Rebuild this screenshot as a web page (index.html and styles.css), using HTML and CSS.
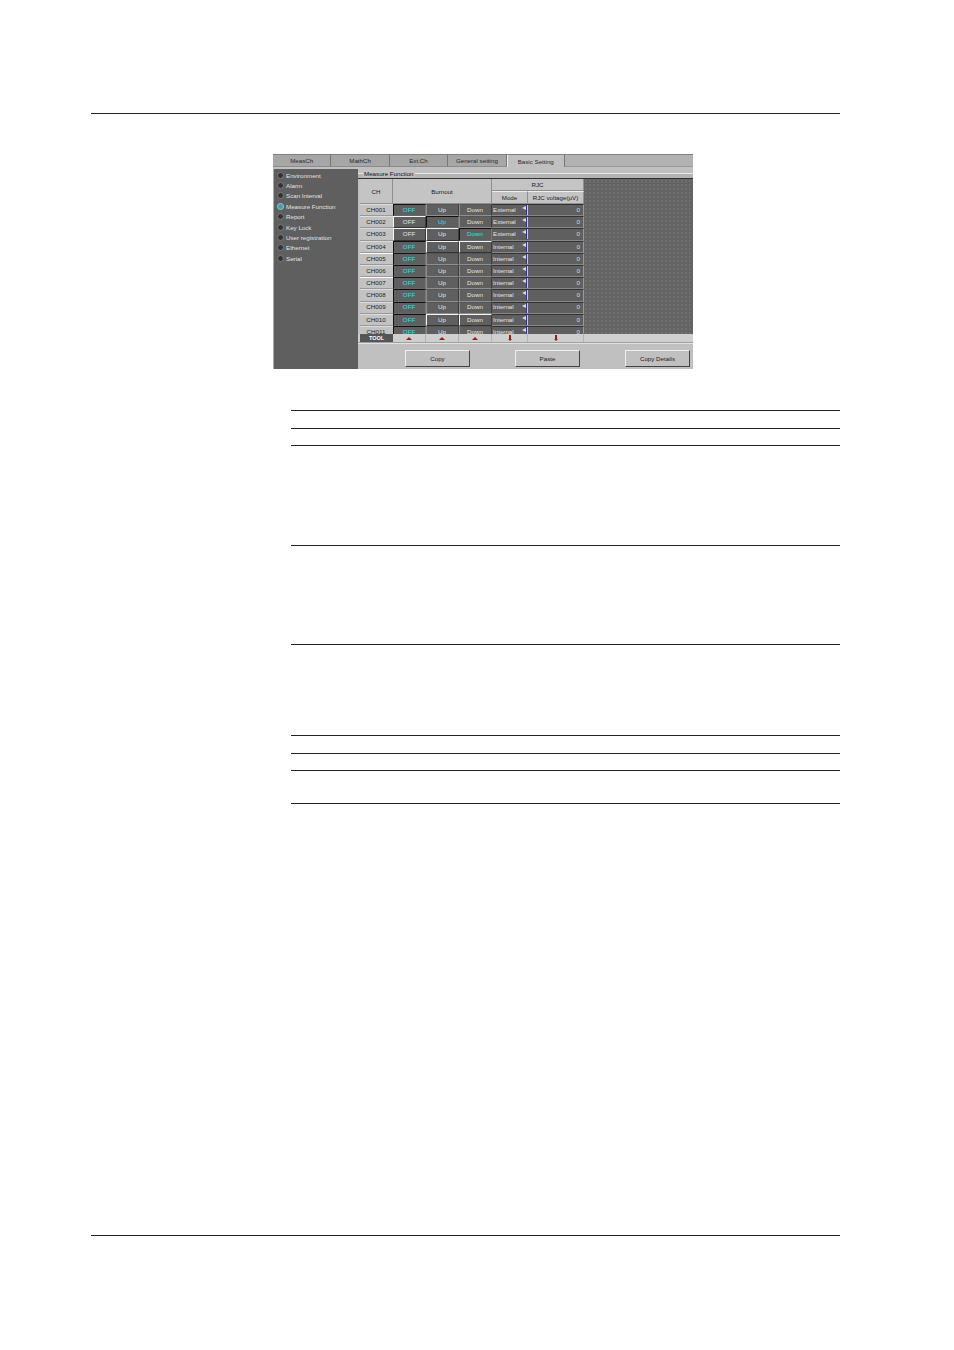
FILE: index.html
```html
<!DOCTYPE html>
<html lang="en">
<head>
    <meta charset="UTF-8">
    <title>Measure Function</title>
    <link rel="stylesheet" href="styles.css">
</head>
<body>
    <div class="head-rule"></div>

    <div class="window">
        <div class="tabs">
            <div class="tab">MeasCh</div>
            <div class="tab">MathCh</div>
            <div class="tab">Ext.Ch</div>
            <div class="tab">General setting</div>
            <div class="tab tab-active">Basic Setting</div>
            <div class="tab-rest"></div>
        </div>
        <div class="window-body">
            <ul class="side">
                <li><span class="lamp"></span>Environment</li>
                <li><span class="lamp"></span>Alarm</li>
                <li><span class="lamp"></span>Scan Interval</li>
                <li><span class="lamp lamp-on"></span>Measure Function</li>
                <li><span class="lamp"></span>Report</li>
                <li><span class="lamp"></span>Key Lock</li>
                <li><span class="lamp"></span>User registration</li>
                <li><span class="lamp"></span>Ethernet</li>
                <li><span class="lamp"></span>Serial</li>
            </ul>
            <div class="main">
                <div class="group-title"><span>Measure Function</span></div>
                <div class="work">
                    <div class="sheet">
                        <div class="sheet-head">
                            <div class="hd hd-ch">CH</div>
                            <div class="hd hd-burnout">Burnout</div>
                            <div class="hd hd-rjc">RJC</div>
                            <div class="hd hd-mode">Mode</div>
                            <div class="hd hd-volt">RJC voltage(µV)</div>
                        </div>
                        <div class="sheet-rows">
                            <div class="row"><div class="ch">CH001</div><div class="btn on">OFF</div><div class="btn">Up</div><div class="btn">Down</div><div class="mode">External<i class="spin"></i></div><div class="volt">0</div></div>
                            <div class="row"><div class="ch">CH002</div><div class="btn lit">OFF</div><div class="btn on">Up</div><div class="btn">Down</div><div class="mode">External<i class="spin"></i></div><div class="volt">0</div></div>
                            <div class="row"><div class="ch">CH003</div><div class="btn lit">OFF</div><div class="btn lit">Up</div><div class="btn on">Down</div><div class="mode">External<i class="spin"></i></div><div class="volt">0</div></div>
                            <div class="row"><div class="ch">CH004</div><div class="btn on">OFF</div><div class="btn lit">Up</div><div class="btn lit">Down</div><div class="mode">Internal<i class="spin"></i></div><div class="volt">0</div></div>
                            <div class="row"><div class="ch lit">CH005</div><div class="btn on">OFF</div><div class="btn">Up</div><div class="btn">Down</div><div class="mode">Internal<i class="spin"></i></div><div class="volt">0</div></div>
                            <div class="row"><div class="ch">CH006</div><div class="btn on">OFF</div><div class="btn">Up</div><div class="btn">Down</div><div class="mode">Internal<i class="spin"></i></div><div class="volt">0</div></div>
                            <div class="row"><div class="ch lit">CH007</div><div class="btn on">OFF</div><div class="btn">Up</div><div class="btn">Down</div><div class="mode">Internal<i class="spin"></i></div><div class="volt">0</div></div>
                            <div class="row"><div class="ch">CH008</div><div class="btn on">OFF</div><div class="btn">Up</div><div class="btn">Down</div><div class="mode">Internal<i class="spin"></i></div><div class="volt">0</div></div>
                            <div class="row"><div class="ch">CH009</div><div class="btn on">OFF</div><div class="btn">Up</div><div class="btn">Down</div><div class="mode">Internal<i class="spin"></i></div><div class="volt">0</div></div>
                            <div class="row"><div class="ch">CH010</div><div class="btn on">OFF</div><div class="btn lit">Up</div><div class="btn lit">Down</div><div class="mode">Internal<i class="spin"></i></div><div class="volt">0</div></div>
                            <div class="row"><div class="ch">CH011</div><div class="btn on">OFF</div><div class="btn">Up</div><div class="btn">Down</div><div class="mode">Internal<i class="spin"></i></div><div class="volt">0</div></div>
                        </div>
                    </div>
                    <div class="dots"></div>
                </div>
                <div class="tool">
                    <div class="tool-name">TOOL</div>
                    <div class="tool-cell"><i class="up"></i></div>
                    <div class="tool-cell"><i class="up"></i></div>
                    <div class="tool-cell"><i class="up"></i></div>
                    <div class="tool-cell"><i class="down"></i></div>
                    <div class="tool-cell"><i class="down"></i></div>
                </div>
                <div class="actions">
                    <button class="act">Copy</button>
                    <button class="act">Paste</button>
                    <button class="act">Copy Details</button>
                </div>
            </div>
        </div>
    </div>

    <div class="spec">
        <div class="spec-row h18"></div>
        <div class="spec-row h17"></div>
        <div class="spec-row h100"></div>
        <div class="spec-row h99"></div>
        <div class="spec-row h91"></div>
        <div class="spec-row h18"></div>
        <div class="spec-row h17"></div>
        <div class="spec-row h33 spec-last"></div>
    </div>

    <div class="foot-rule"></div>
</body>
</html>
```

FILE: styles.css
```css
* {
    box-sizing: border-box;
}

body {
    margin: 0;
    height: 1350px;
    background-color: white;
    font-family: "Liberation Sans", Arial, sans-serif;
    overflow: hidden;
}

.head-rule {
    margin: 113px 114px 0 91px;
    height: 1px;
    background-color: #222;
}

.foot-rule {
    margin: 431px 114px 0 91px;
    height: 1px;
    background-color: #222;
}

/* Screenshot window */
.window {
    width: 420px;
    height: 215px;
    margin: 40px 0 0 273px;
    background-color: #c0c0c0;
    font-size: 6.2px;
    display: flex;
    flex-direction: column;
    overflow: hidden;
}

.tabs {
    display: flex;
    height: 13px;
    border-top: 1px solid #808080;
    flex-shrink: 0;
}

.tab {
    width: 58.4px;
    background-color: #a6a6a6;
    border-right: 1px solid #777;
    border-bottom: 1px solid #8c8c8c;
    color: #2a2a2a;
    display: flex;
    align-items: center;
    justify-content: center;
}

.tab-active {
    background-color: #c0c0c0;
    border-left: 1px solid #eee;
    border-bottom: none;
}

.tab-rest {
    flex: 1;
    background-color: #b2b2b2;
    border-bottom: 1px solid #999;
}

.window-body {
    flex: 1;
    display: flex;
    min-height: 0;
}

.side {
    list-style: none;
    width: 85px;
    margin: 2px 0 0;
    padding: 1px 0 0 3px;
    background-color: #5f5f5f;
    border-left: 1px solid #a8a8a8;
    color: #e2e2e2;
}

.side li {
    height: 10.4px;
    display: flex;
    align-items: center;
    gap: 2px;
}

.lamp {
    width: 7px;
    height: 7px;
    border-radius: 50%;
    background-color: #333;
    border: 1px solid #7c7c7c;
}

.lamp-on {
    background-color: #3f9fae;
    border-color: #9ccbd2;
}

.main {
    flex: 1;
    display: flex;
    flex-direction: column;
    min-width: 0;
}

.group-title {
    height: 12px;
    padding: 3px 0 0 5px;
    background: linear-gradient(#c0c0c0 6px, #e6e6e6 6px, #e6e6e6 7px, #b4b4b4 7px);
    border-bottom: 1px solid #333;
    color: #111;
    line-height: 7px;
}

.group-title span {
    background-color: #c0c0c0;
    padding: 0 1px;
}

.work {
    height: 155px;
    display: flex;
    padding-left: 2px;
    background-color: #c0c0c0;
}

.sheet {
    width: 224px;
    flex-shrink: 0;
}

.sheet-head {
    height: 25px;
    display: grid;
    grid-template-columns: 33px 99px 36px 56px;
    grid-template-rows: 12px 13px;
}

.hd {
    display: flex;
    align-items: center;
    justify-content: center;
    background-color: #c4c4c4;
    color: #222;
    border-right: 1px solid #8f8f8f;
    border-bottom: 1px solid #8f8f8f;
}

.hd-ch,
.hd-burnout {
    grid-row: span 2;
}

.hd-rjc {
    grid-column: span 2;
}

.hd-mode,
.hd-volt {
    border-top: 1px solid #eee;
}

.sheet-rows {
    height: 130px;
    overflow: hidden;
}

.row {
    height: 12.2px;
    display: grid;
    grid-template-columns: 33px 33px 33px 33px 36px 56px;
}

.ch,
.btn,
.mode,
.volt {
    display: flex;
    align-items: center;
    height: 12.2px;
    line-height: 1;
}

.ch {
    justify-content: center;
    padding-right: 1px;
    background-color: #c2c2c2;
    color: #222;
    border-top: 1px solid #dcdcdc;
    border-bottom: 1px solid #9a9a9a;
}

.ch.lit {
    border-top-color: white;
}

.btn {
    justify-content: center;
    padding-right: 1px;
    background-color: #5f5f5f;
    color: #e4e4e4;
    border: 1px solid #8e8e8e;
    border-top-color: #555;
    border-right-color: #3c3c3c;
    border-bottom-color: #8e8e8e;
}

.btn.lit {
    border-top-color: #f4f4f4;
    border-left-color: #f4f4f4;
    border-bottom-color: #333;
}

.btn.on {
    color: #19e4e4;
    border-color: #111 #777 #666 #111;
}

.mode {
    justify-content: space-between;
    padding-left: 1px;
    background-color: #5f5f5f;
    color: #e4e4e4;
    border-top: 1px solid #333;
    border-bottom: 1px solid #888;
}

.spin {
    position: relative;
    width: 2px;
    height: 10px;
    background-color: #c8c8f4;
    border-left: 1px solid #30308a;
}

.spin::before {
    content: "";
    position: absolute;
    left: -5px;
    top: 1px;
    border-style: solid;
    border-width: 2px 4px 2px 0;
    border-color: transparent #d4d4ee transparent transparent;
}

.volt {
    justify-content: flex-end;
    padding-right: 3px;
    background-color: #5f5f5f;
    color: #dcdcdc;
    border-top: 1px solid #333;
    border-bottom: 1px solid #888;
    border-right: 1px solid #999;
}

.dots {
    flex: 1;
    background-color: #646464;
    background-image: radial-gradient(circle, #6f6f6f 0.7px, transparent 1px);
    background-size: 4px 4px;
}

.tool {
    height: 9px;
    display: grid;
    grid-template-columns: 33px 33px 33px 33px 36px 56px 1fr;
    padding-left: 2px;
    background-color: #cfcfcf;
    border-bottom: 1px solid #a0a0a0;
}

.tool-name {
    background-color: #555;
    color: white;
    font-weight: bold;
    font-size: 5.5px;
    display: flex;
    align-items: center;
    justify-content: center;
}

.tool-cell {
    border-right: 1px solid #b4b4b4;
    display: flex;
    align-items: center;
    justify-content: center;
}

.up {
    border-style: solid;
    border-width: 0 3px 3px;
    border-color: transparent transparent #a01818;
}

.down {
    position: relative;
    top: -1px;
    width: 2px;
    height: 4px;
    background-color: #a01818;
}

.down::after {
    content: "";
    position: absolute;
    left: -1px;
    top: 4px;
    border-style: solid;
    border-width: 2px 2px 0;
    border-color: #a01818 transparent transparent;
}

.actions {
    flex: 1;
    display: flex;
    justify-content: space-between;
    padding: 6px 3px 2px 47px;
    background-color: #c0c0c0;
    border-top: 1px solid #e2e2e2;
}

.act {
    width: 65px;
    height: 17px;
    padding: 0;
    background-color: #c0c0c0;
    border: 1px solid;
    border-color: #eee #444 #444 #eee;
    color: #222;
    font-family: inherit;
    font-size: 6.2px;
}

/* Empty ruled table under the screenshot */
.spec {
    margin: 41px 114px 0 291px;
}

.spec-row {
    border-top: 1px solid #222;
}

.spec-last {
    border-bottom: 1px solid #222;
}

.h18 { height: 18px; }
.h17 { height: 17px; }
.h33 { height: 34px; }
.h91 { height: 91px; }
.h99 { height: 99px; }
.h100 { height: 100px; }
```
